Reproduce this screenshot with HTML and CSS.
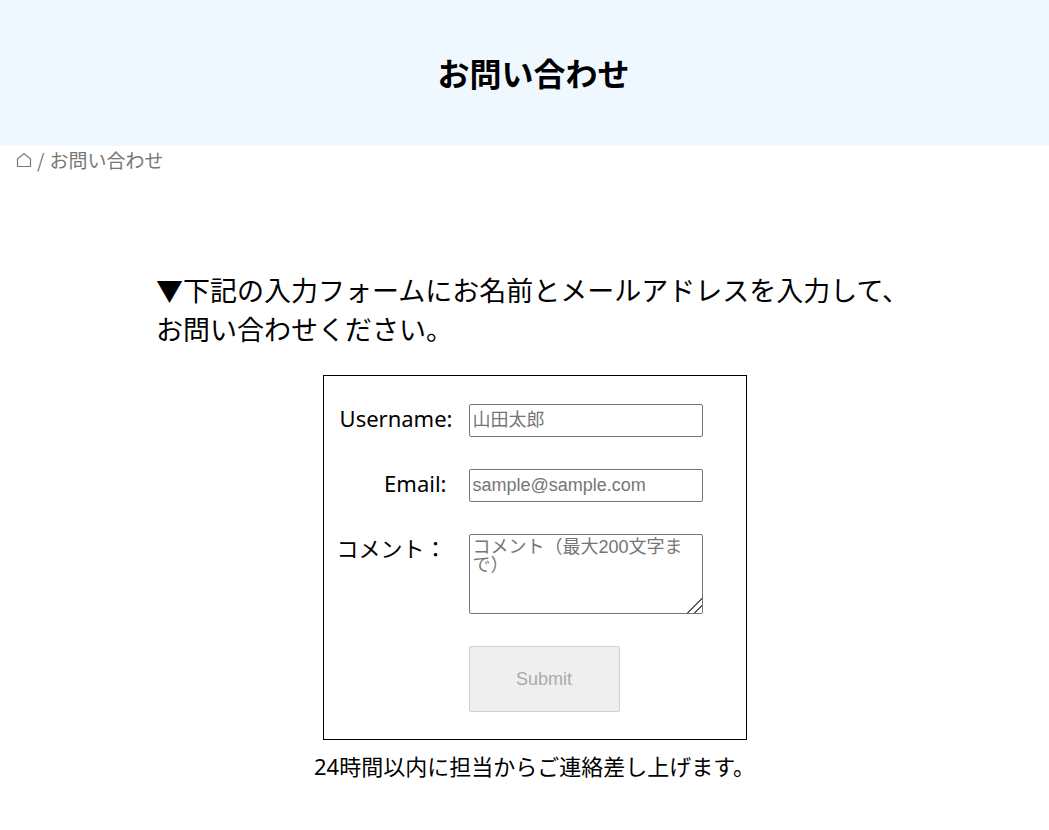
FILE: index.html
```html
<!DOCTYPE html>
<html lang="ja">
<head>
    <meta charset="UTF-8">
    <meta name="viewport" content="width=device-width, initial-scale=1.0">
    <title>お問い合わせ</title>
    <link rel="stylesheet" href="styles.css">
</head>
<body>
<header class="page-header">
    <h1>お問い合わせ</h1>
</header>

<nav class="breadcrumb">
    <a href="#" aria-label="ホーム">
        <svg class="home-icon" viewBox="0 0 16 16" fill="none" stroke="currentColor" stroke-width="1.2">
            <path d="M1.5 14.5 V7 L8 1.5 L14.5 7 V14.5 Z"/>
        </svg>
    </a>
    <span>/</span>
    <span>お問い合わせ</span>
</nav>

<main class="contact">
    <p class="lead">▼下記の入力フォームにお名前とメールアドレスを入力して、お問い合わせください。</p>

    <form class="contact-form">
        <label for="username">Username:</label>
        <input type="text" id="username" placeholder="山田太郎">

        <label for="email" class="indent">Email:</label>
        <input type="email" id="email" placeholder="sample@sample.com">

        <label for="comment" class="indent">コメント：</label>
        <textarea id="comment" maxlength="200" placeholder="コメント（最大200文字まで）"></textarea>

        <button type="submit" class="submit-btn" disabled>Submit</button>
    </form>

    <p class="note">24時間以内に担当からご連絡差し上げます。</p>
</main>
</body>
</html>
```
FILE: styles.css
```css
* {
    box-sizing: border-box;
}

body {
    margin: 0;
    color: #000;
    font-family: "Noto Sans CJK JP", sans-serif;
}

.page-header {
    padding: 48px 16px 50px 34px;
    background-color: #f0f8ff;
    text-align: center;
}

h1 {
    margin: 0;
    font-size: 32px;
    line-height: 48px;
}

.breadcrumb {
    display: flex;
    align-items: center;
    gap: 5px;
    padding: 0 16px;
    color: #777;
    font-size: 19px;
    line-height: 28px;
}

.breadcrumb a {
    display: flex;
    color: inherit;
}

.home-icon {
    width: 16px;
    height: 16px;
}

.contact {
    display: flex;
    flex-direction: column;
    align-items: center;
    padding: 96px 136px 32px 156px;
}

.lead {
    margin: 0 0 27px;
    font-size: 27px;
    line-height: 39px;
}

.contact-form {
    display: grid;
    grid-template-columns: 116px 234px;
    column-gap: 16px;
    row-gap: 32px;
    width: 424px;
    padding: 28px 13px 27px;
    border: 1px solid #000;
}

.contact-form label {
    font-family: "Noto Sans", "Noto Sans CJK JP", sans-serif;
    font-size: 22px;
    line-height: 28px;
    text-align: right;
    white-space: nowrap;
}

.contact-form .indent {
    padding-right: 6px;
}

.contact-form input,
.contact-form textarea {
    width: 100%;
    height: 33px;
    margin: 0;
    padding: 3px;
    border: 1px solid #767676;
    border-radius: 2px;
    font-family: "Liberation Sans", "Noto Sans CJK JP", sans-serif;
    font-size: 18px;
}

.contact-form input::placeholder,
.contact-form textarea::placeholder {
    color: #757575;
}

.contact-form textarea {
    height: 80px;
    line-height: 18px;
}

/* larger grip in the corner of the comment box */
.contact-form textarea::-webkit-resizer {
    background: linear-gradient(135deg, transparent 47%, #555 47%, #555 54%, transparent 54%, transparent 72%, #555 72%, #555 79%, transparent 79%);
}

.submit-btn {
    grid-column: 2;
    width: 151px;
    height: 66px;
    border: 1px solid #d0d0d0;
    border-radius: 2px;
    background-color: #efefef;
    color: #aaa;
    font-family: "Liberation Sans", sans-serif;
    font-size: 18px;
}

.note {
    margin: 10px 0 0;
    font-family: "Noto Sans", "Noto Sans CJK JP", sans-serif;
    font-size: 22px;
    line-height: 32px;
}
```
